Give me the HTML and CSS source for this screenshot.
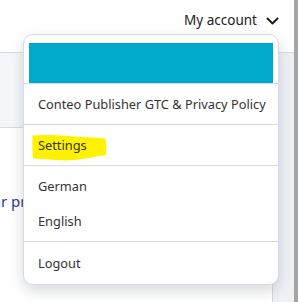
FILE: index.html
```html
<!DOCTYPE html>
<html>
<head>
<meta charset="utf-8">
<link rel="stylesheet" href="styles.css">
</head>
<body>
<div class="page">
  <div class="main">
    <header class="topbar">
      <div class="account">
        <span class="account-label">My account</span>
        <svg class="chevron" width="13" height="8" viewBox="0 0 13 8"><polyline points="1.5,1.5 6.5,6.5 11.5,1.5" fill="none" stroke="#1e1e1e" stroke-width="2" stroke-linecap="round" stroke-linejoin="round"/></svg>
      </div>
    </header>
    <div class="content">
      <div class="column">
        <div class="band"></div>
        <div class="card">
          <p class="card-text">your profile</p>
        </div>
      </div>
      <div class="aside"></div>
    </div>
  </div>
  <div class="scrollbar"></div>
</div>

<nav class="menu">
  <div class="menu-head"><div class="brand"></div></div>
  <div class="menu-section">
    <div class="menu-item">Conteo Publisher GTC &amp; Privacy Policy</div>
  </div>
  <div class="menu-section">
    <div class="menu-item highlighted">
      <svg class="marker" width="76" height="27" viewBox="0 0 76 27"><path d="M0.5,1.5 C10,0.5 22,1 36,2 C50,3 62,3.5 73.5,4.5 C74.5,10 74.5,16 74,21 C62,22.5 52,25.5 40,26.3 C27,26.8 14,25 1,24.5 C0.3,17 0.2,9 0.5,1.5 Z" fill="#fff200"/></svg>
      <span class="label">Settings</span>
    </div>
  </div>
  <div class="menu-section lang">
    <div class="menu-item">German</div>
    <div class="menu-item">English</div>
  </div>
  <div class="menu-section last">
    <div class="menu-item">Logout</div>
  </div>
</nav>
</body>
</html>
```

FILE: styles.css
```css
* { box-sizing: border-box; }
html, body {
  margin: 0;
  padding: 0;
  width: 298px;
  height: 302px;
  overflow: hidden;
  background: #ffffff;
  font-family: "Noto Sans", "Open Sans", sans-serif;
}
.page {
  display: flex;
  height: 302px;
}
.main {
  flex: 1;
  display: flex;
  flex-direction: column;
}
.scrollbar {
  flex: 0 0 4px;
  background: #a5a5a5;
}
.topbar {
  height: 53px;
  border-bottom: 1px solid #d6dae3;
  display: flex;
  justify-content: flex-end;
  align-items: flex-start;
  padding: 9px 15px 0 0;
  background: #fff;
}
.account {
  display: flex;
  align-items: center;
  gap: 9px;
}
.account-label {
  font-size: 13.5px;
  color: #222;
  line-height: 22px;
}
.chevron { display: block; margin-top: 1px; }
.content {
  flex: 1;
  display: flex;
}
.column {
  flex: 0 0 273px;
  display: flex;
  flex-direction: column;
}
.band {
  height: 75px;
  background: #f4f6fa;
  border-bottom: 1px solid #d6dae3;
}
.card {
  flex: 1;
  background: #fff;
  border-right: 1px solid #d3d7e2;
  overflow: hidden;
}
.card-text {
  margin: 63px 0 0 -25px;
  white-space: nowrap;
  font-size: 15px;
  color: #2c3b8f;
  line-height: 20px;
}
.aside {
  flex: 1;
  background: #eef1f6;
}
.menu {
  position: absolute;
  left: 23px;
  top: 34px;
  width: 256px;
  background: #fff;
  border: 1px solid #d6dae3;
  border-radius: 10px;
  box-shadow: 0 6px 14px rgba(40, 50, 70, 0.18);
  overflow: hidden;
}
.menu-head {
  padding: 8px 5px 0;
  border-bottom: 1px solid #d6dae3;
}
.brand {
  height: 40px;
  background: #00a9cc;
}
.menu-section {
  padding: 3px 0;
  border-bottom: 1px solid #d6dae3;
}
.menu-section.lang {
  padding: 3px 0 2px;
}
.menu-section.lang .menu-item {
  height: 35px;
  line-height: 35px;
}
.menu-section.last {
  border-bottom: none;
  padding: 4px 0;
}
.menu-item {
  height: 34px;
  line-height: 34px;
  padding-left: 14px;
  font-size: 12.8px;
  color: #333;
  white-space: nowrap;
}
.highlighted { position: relative; }
.marker {
  position: absolute;
  left: 8px;
  top: 6px;
}
.label { position: relative; }
```
